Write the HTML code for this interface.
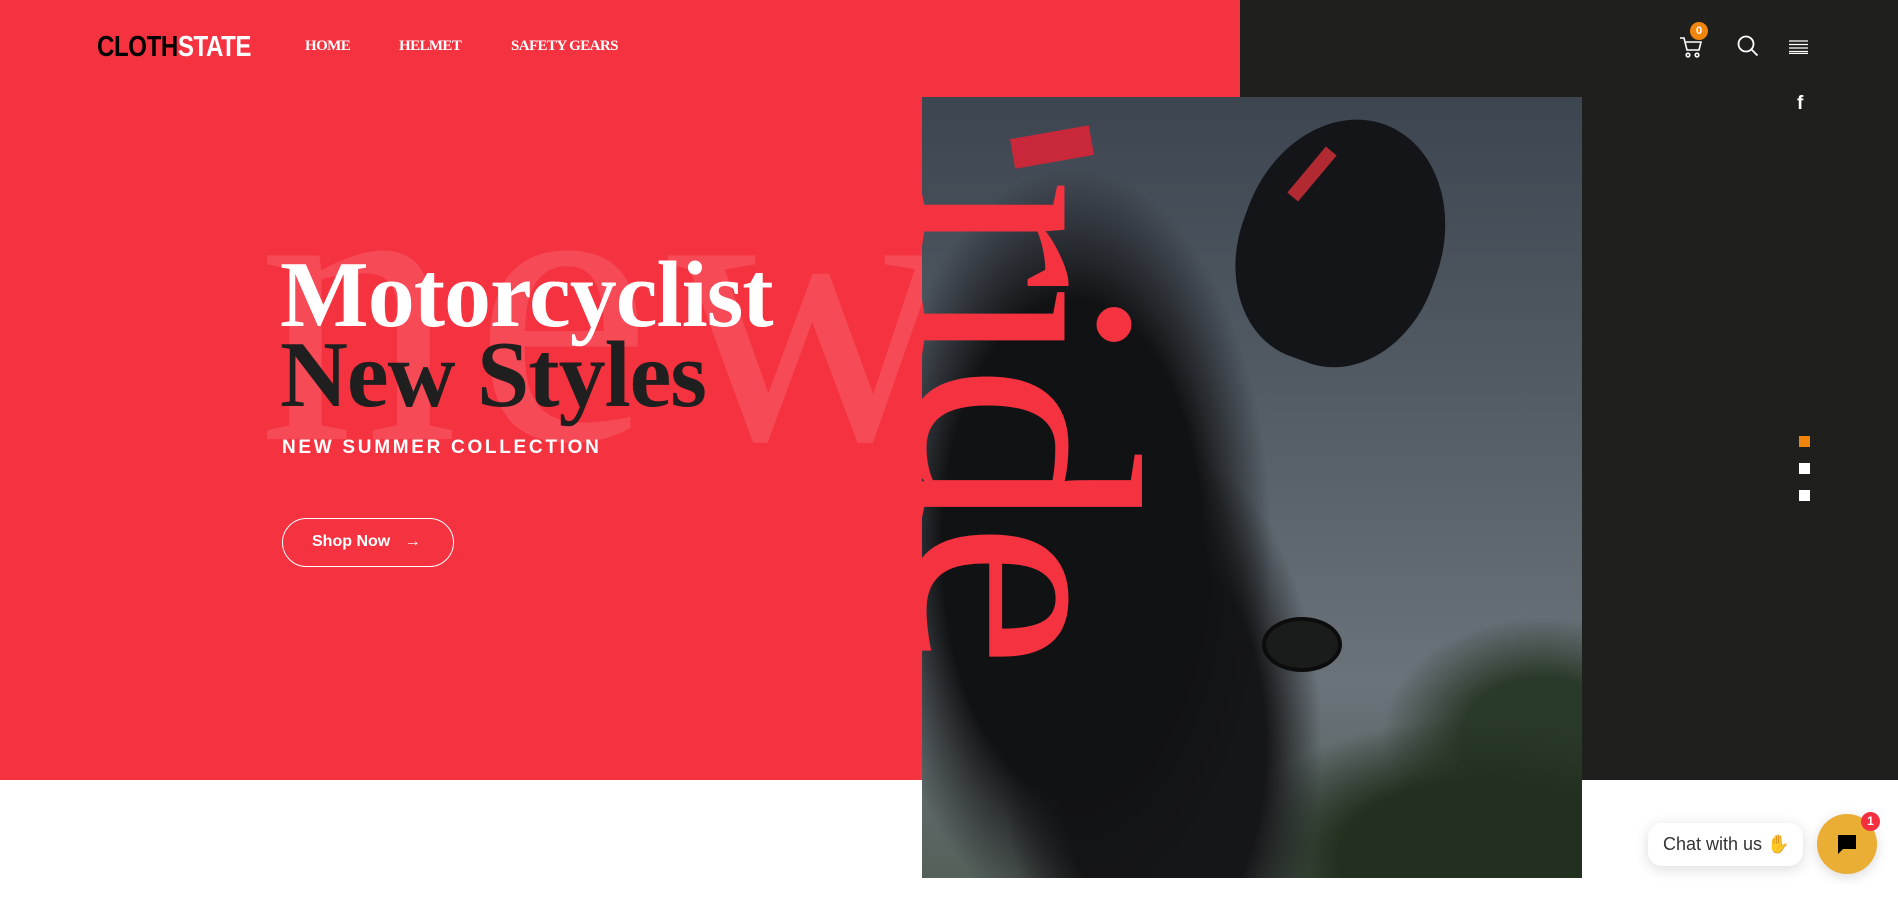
<!DOCTYPE html>
<html><head><meta charset="utf-8"><style>
*{margin:0;padding:0;box-sizing:border-box}
body{width:1898px;height:923px;overflow:hidden;background:#fff;position:relative;font-family:"Liberation Sans",sans-serif}
.red{position:absolute;left:0;top:0;width:1240px;height:780px;background:#f53240;overflow:hidden}
.dark{position:absolute;left:1240px;top:0;width:658px;height:780px;background:#1f201e}
.abs{position:absolute}
.logo{left:97px;top:31px;font-family:"Liberation Sans",sans-serif;font-weight:bold;font-size:29px;letter-spacing:-0.5px;transform:scaleX(0.83);transform-origin:left}
.nav{top:38px;color:#fff;font-family:"Liberation Serif",serif;font-weight:bold;font-size:15px;letter-spacing:-0.6px}
.bg{left:258px;top:105px;font-family:"Liberation Serif",serif;font-size:400px;color:rgba(255,255,255,0.12);line-height:1;letter-spacing:16px}
.h{left:280px;font-family:"Liberation Serif",serif;font-weight:bold;font-size:94px;line-height:1;letter-spacing:-1px}
.sub{left:282px;top:437px;color:#fff;font-weight:bold;font-size:19px;letter-spacing:2.7px}
.btn{left:282px;top:518px;width:172px;height:49px;border:1.5px solid #fff;border-radius:25px;color:#fff;font-weight:bold;font-size:16px;line-height:46px;padding-left:29px}
.photo{left:922px;top:97px;width:660px;height:781px;overflow:hidden;
background:
radial-gradient(ellipse 200px 380px at 150px 450px,#111214 65%,transparent 100%),
radial-gradient(ellipse 160px 300px at 240px 650px,#151618 65%,transparent 100%),
radial-gradient(ellipse 260px 140px at 560px 760px,#22301f 55%,transparent 100%),
radial-gradient(ellipse 160px 120px at 620px 640px,#2a3a2a 50%,transparent 100%),
linear-gradient(180deg,#3d4550 0%,#5a636b 50%,#6a737a 75%,#55605a 100%)}
.ride{transform-origin:0 0;transform:rotate(90deg);font-family:"Liberation Serif",serif;font-size:330px;line-height:1;color:#f53240;letter-spacing:-8px;white-space:nowrap}
</style></head><body>
<div class="red">
<div class="abs bg">new</div>
</div>
<div class="dark"></div>
<div class="abs logo"><span style="color:#000">CLOTH</span><span style="color:#fff">STATE</span></div>
<div class="abs nav" style="left:305px">HOME</div>
<div class="abs nav" style="left:399px">HELMET</div>
<div class="abs nav" style="left:511px">SAFETY GEARS</div>
<div class="abs h" style="top:248px;color:#fff">Motorcyclist</div>
<div class="abs h" style="top:328px;color:#1f1f1f">New Styles</div>
<div class="abs sub">NEW SUMMER COLLECTION</div>
<div class="abs btn">Shop Now <span style="font-weight:normal;margin-left:10px">→</span></div>
<div class="abs photo">
 <div class="abs" style="left:320px;top:20px;width:200px;height:250px;border-radius:50% 50% 45% 45%;background:#141518;transform:rotate(20deg)"></div>
 <div class="abs" style="left:360px;top:70px;width:60px;height:14px;background:#d8303a;transform:rotate(-50deg);opacity:.8"></div>
 <div class="abs" style="left:90px;top:35px;width:80px;height:30px;background:#c8283a;transform:rotate(-10deg)"></div>
 <div class="abs" style="left:340px;top:520px;width:80px;height:55px;border-radius:50%;background:#1a1c1c;border:4px solid #0c0c0c"></div>
</div>
<div class="abs" style="left:922px;top:97px;width:660px;height:781px;overflow:hidden">
<div class="abs ride" style="left:266px;top:82px">ride</div>
</div>
<!-- icons -->
<svg class="abs" style="left:1678px;top:34px" width="26" height="26" viewBox="0 0 26 26" fill="none" stroke="#fff" stroke-width="1.6"><path d="M2 4h4l3 12h12l2-8H8"/><circle cx="10" cy="21" r="1.8"/><circle cx="19" cy="21" r="1.8"/></svg>
<div class="abs" style="left:1690px;top:22px;width:18px;height:18px;border-radius:50%;background:#f0850d;color:#fff;font-size:11px;font-weight:bold;text-align:center;line-height:18px">0</div>
<svg class="abs" style="left:1736px;top:34px" width="24" height="24" viewBox="0 0 24 24" fill="none" stroke="#fff" stroke-width="1.8"><circle cx="10" cy="10" r="7.5"/><path d="M15.5 15.5l6 6"/></svg>
<svg class="abs" style="left:1789px;top:40px" width="19" height="14" viewBox="0 0 19 14" stroke="#fff" stroke-width="1.3"><path d="M0 1h19M0 4.5h19M0 8h19M0 11.5h19M0 13.5h19"/></svg>
<div class="abs" style="left:1797px;top:93px;color:#fff;font-weight:bold;font-size:19px">f</div>
<div class="abs" style="left:1799px;top:436px;width:11px;height:11px;background:#f0850d"></div>
<div class="abs" style="left:1799px;top:463px;width:11px;height:11px;background:#fff"></div>
<div class="abs" style="left:1799px;top:490px;width:11px;height:11px;background:#fff"></div>
<!-- chat -->
<div class="abs" style="left:1648px;top:823px;width:155px;height:43px;border-radius:14px;background:#fff;box-shadow:0 3px 14px rgba(0,0,0,.15);font-size:18px;color:#333;line-height:43px;padding-left:15px">Chat with us <span style="color:#f2c14e">✋</span></div>
<div class="abs" style="left:1817px;top:814px;width:60px;height:60px;border-radius:50%;background:#e9ae33;box-shadow:0 3px 12px rgba(0,0,0,.15)"></div>
<svg class="abs" style="left:1836px;top:833px" width="22" height="22" viewBox="0 0 22 22"><path d="M2 2h18v14H7l-5 5z" fill="#000"/></svg>
<div class="abs" style="left:1861px;top:812px;width:19px;height:19px;border-radius:50%;background:#f42f3f;color:#fff;font-size:12px;font-weight:bold;text-align:center;line-height:19px">1</div>
</body></html>
